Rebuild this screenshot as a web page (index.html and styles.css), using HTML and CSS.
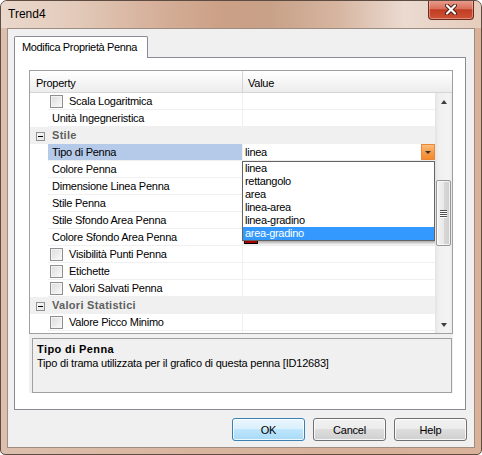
FILE: index.html
```html
<!DOCTYPE html>
<html lang="it">
<head>
<meta charset="utf-8">
<title>Trend4</title>
<link rel="stylesheet" href="styles.css">
</head>
<body>
<div class="window">
  <div class="titlebar">
    <span class="title">Trend4</span>
    <div class="close">
      <svg width="12" height="11" viewBox="0 0 12 11">
        <path d="M2 1.5 L10 9.5 M10 1.5 L2 9.5" stroke="#4a1d12" stroke-width="4" stroke-linecap="round"/>
        <path d="M2 1.5 L10 9.5 M10 1.5 L2 9.5" stroke="#ffffff" stroke-width="2.2" stroke-linecap="round"/>
      </svg>
    </div>
  </div>
  <div class="client">
    <div class="tabs"><div class="tab">Modifica Proprietà Penna</div></div>
    <div class="panel">
      <div class="pg">
        <div class="grid">
          <div class="ghead">
            <div class="hprop">Property</div>
            <div class="hval">Value</div>
          </div>
          <div class="gbody">
            <div class="rows">
              <div class="row"><div class="margin"></div><div class="name"><span class="cb"></span>Scala Logaritmica</div><div class="val"></div></div>
              <div class="row"><div class="margin"></div><div class="name">Unità Ingegneristica</div><div class="val"></div></div>
              <div class="row cat"><span class="minus"></span><span class="cattext">Stile</span></div>
              <div class="row sel"><div class="margin"></div><div class="name">Tipo di Penna</div><div class="val editor"><span class="edtext">linea</span><span class="ddbtn"><span class="ddtri"></span></span></div></div>
              <div class="row"><div class="margin"></div><div class="name">Colore Penna</div><div class="val"></div></div>
              <div class="row"><div class="margin"></div><div class="name">Dimensione Linea Penna</div><div class="val"></div></div>
              <div class="row"><div class="margin"></div><div class="name">Stile Penna</div><div class="val"></div></div>
              <div class="row"><div class="margin"></div><div class="name">Stile Sfondo Area Penna</div><div class="val"></div></div>
              <div class="row"><div class="margin"></div><div class="name">Colore Sfondo Area Penna</div><div class="val"><span class="sw"></span></div></div>
              <div class="row"><div class="margin"></div><div class="name"><span class="cb"></span>Visibilità Punti Penna</div><div class="val"></div></div>
              <div class="row"><div class="margin"></div><div class="name"><span class="cb"></span>Etichette</div><div class="val"></div></div>
              <div class="row"><div class="margin"></div><div class="name"><span class="cb"></span>Valori Salvati Penna</div><div class="val"></div></div>
              <div class="row cat"><span class="minus"></span><span class="cattext">Valori Statistici</span></div>
              <div class="row"><div class="margin"></div><div class="name"><span class="cb"></span>Valore Picco Minimo</div><div class="val"></div></div>
              <div class="row"><div class="margin"></div><div class="name"></div><div class="val"><span class="sw"></span></div></div>

              <div class="ddlist">
                <div class="opt">linea</div>
                <div class="opt">rettangolo</div>
                <div class="opt">area</div>
                <div class="opt">linea-area</div>
                <div class="opt">linea-gradino</div>
                <div class="opt hl">area-gradino</div>
              </div>
            </div>
            <div class="vscroll">
              <div class="sbtn"><span class="tri-up"></span></div>
              <div class="track-top"></div>
              <div class="thumb"><span class="grip"></span><span class="grip"></span><span class="grip"></span><span class="grip"></span></div>
              <div class="track-bottom"></div>
              <div class="sbtn"><span class="tri-down"></span></div>
            </div>
          </div>
        </div>
        <div class="desc">
          <div class="dtitle">Tipo di Penna</div>
          <div class="dtext">Tipo di trama utilizzata per il grafico di questa penna [ID12683]</div>
        </div>
      </div>
    </div>
    <div class="buttons">
      <button class="btn default">OK</button>
      <button class="btn">Cancel</button>
      <button class="btn">Help</button>
    </div>
  </div>
</div>
</body>
</html>
```

FILE: styles.css
```css
* { box-sizing: border-box; }
html, body { margin: 0; padding: 0; }
body {
  width: 482px;
  height: 455px;
  overflow: hidden;
  font-family: "Liberation Sans", Arial, sans-serif;
  font-size: 11px;
  letter-spacing: -0.25px;
  color: #000;
  background: #fff;
}

.window {
  width: 482px;
  height: 455px;
  border: 1px solid #5e4c43;
  border-radius: 7px 7px 5px 5px;
  background: linear-gradient(to right, #dcbfad 0%, #d9b59f 40%, #d7b19a 70%, #dab29a 100%);
  display: flex;
  flex-direction: column;
  overflow: hidden;
}

.titlebar {
  height: 27px;
  display: flex;
  align-items: flex-start;
  padding-left: 7px;
  background: linear-gradient(to right, #ead8cc 0%, #e3cbbb 15%, #d6b09a 32%, #cba086 46%, #c8a188 56%, #d6b5a0 70%, #ebdad0 84%, #e6cdbd 100%);
}
.title {
  font-size: 12px;
  line-height: 27px;
  letter-spacing: 0;
}
.close {
  margin-left: auto;
  margin-right: 7px;
  margin-top: -1px;
  width: 46px;
  height: 20px;
  border: 1px solid #6c2a1f;
  border-top: none;
  border-radius: 0 0 4px 4px;
  background: linear-gradient(#e9a091 0%, #d9705a 45%, #c23c24 52%, #cd5235 100%);
  box-shadow: inset 0 0 0 1px rgba(255, 210, 200, 0.45);
  display: flex;
  align-items: center;
  justify-content: center;
}

.client {
  flex: 1;
  margin: 0 6px 6px 6px;
  border: 1px solid #9f8c80;
  background: #f0f0f0;
  display: flex;
  flex-direction: column;
  padding: 7px 8px 0 6px;
}

.tabs { display: flex; height: 21px; }
.tab {
  width: 134px;
  height: 22px;
  margin-bottom: -1px;
  position: relative;
  z-index: 1;
  border: 1px solid #898c95;
  border-bottom: none;
  border-radius: 2px 2px 0 0;
  background: #fff;
  padding-left: 7px;
  line-height: 20px;
  letter-spacing: -0.35px;
}

.panel {
  height: 353px;
  border: 1px solid #898c95;
  background: #fff;
  padding: 12px 12px 0 14px;
}

.pg {
  width: 424px;
  height: 323px;
  display: flex;
  flex-direction: column;
  background: #f0f0f0;
}

.grid {
  height: 264px;
  border: 1px solid #a0a0a0;
  background: #fff;
  display: flex;
  flex-direction: column;
}
.ghead {
  height: 22px;
  display: flex;
  background: linear-gradient(#ffffff 0%, #f7f7f7 45%, #ececec 100%);
  border-bottom: 1px solid #d5d5d5;
}
.hprop {
  width: 213px;
  border-right: 1px solid #d5d5d5;
  padding: 4px 0 0 6px;
  line-height: 16px;
}
.hval {
  flex: 1;
  padding: 4px 0 0 5px;
  line-height: 16px;
}

.gbody { flex: 1; display: flex; overflow: hidden; }
.rows { flex: 1; position: relative; overflow: hidden; }

.row {
  display: grid;
  grid-template-columns: 18px 195px 192px;
  height: 17px;
}
.name {
  height: 17px;
  border-bottom: 1px solid #f0f0f0;
  border-right: 1px solid #f0f0f0;
  padding: 0 0 0 4px;
  line-height: 16px;
  white-space: nowrap;
  overflow: hidden;
}
.val {
  height: 17px;
  border-bottom: 1px solid #f0f0f0;
  padding: 1px 0 0 1px;
  line-height: 16px;
  white-space: nowrap;
  overflow: hidden;
}
.cb {
  display: inline-block;
  vertical-align: top;
  width: 13px;
  height: 13px;
  margin: 2px 6px 0 -2px;
  border: 1px solid #8e8f8f;
  background: linear-gradient(135deg, #dcdcdc 0%, #ececec 55%, #fafafa 100%);
  box-shadow: inset 0 0 0 1px #f4f4f4;
}
.row.cat {
  display: flex;
  background: #f0f0f0;
}
.minus {
  width: 9px;
  height: 9px;
  margin: 5px 0 0 6px;
  border: 1px solid #919191;
  background: linear-gradient(135deg, #f8f8f8, #e6e6e6);
  position: relative;
}
.minus::after {
  content: "";
  position: absolute;
  left: 1px;
  top: 3px;
  width: 5px;
  height: 1px;
  background: #000;
}
.cattext {
  margin-left: 7px;
  font-weight: bold;
  color: #5f5f5f;
  letter-spacing: 0.3px;
  line-height: 16px;
}

.row.sel .name { background: #b5c9e8; }
.val.editor {
  display: flex;
  padding: 0;
  background: #fff;
}
.edtext {
  flex: 1;
  padding: 0 0 0 2px;
  line-height: 16px;
}
.ddbtn {
  width: 14px;
  height: 16px;
  background: linear-gradient(#fbbe7e 0%, #f79a45 55%, #f58a2e 100%);
  border: 1px solid #e8883a;
  display: flex;
  align-items: center;
  justify-content: center;
}
.ddtri {
  width: 0;
  height: 0;
  border-left: 3px solid transparent;
  border-right: 3px solid transparent;
  border-top: 3px solid #333;
}

.sw {
  display: inline-block;
  vertical-align: top;
  width: 14px;
  height: 13px;
  margin: 1px 0 0 0;
  border: 1px solid #000;
  background: #e00000;
}

.ddlist {
  position: absolute;
  left: 212px;
  top: 68px;
  width: 193px;
  height: 80px;
  border: 1px solid #646464;
  background: #fff;
  box-shadow: 2px 2px 3px rgba(0, 0, 0, 0.35);
  letter-spacing: -0.3px;
}
.opt {
  height: 13px;
  line-height: 13px;
  padding-left: 2px;
  white-space: nowrap;
}
.opt.hl { background: #3399ff; color: #fff; }

.vscroll {
  width: 17px;
  display: flex;
  flex-direction: column;
  background: linear-gradient(to right, #e3e3e3 0%, #efefef 20%, #f4f4f4 80%, #ebebeb 100%);
}
.sbtn {
  height: 17px;
  display: flex;
  align-items: center;
  justify-content: center;
}
.tri-up {
  width: 0; height: 0;
  border-left: 3.5px solid transparent;
  border-right: 3.5px solid transparent;
  border-bottom: 4px solid #3d3d3d;
}
.tri-down {
  width: 0; height: 0;
  border-left: 3.5px solid transparent;
  border-right: 3.5px solid transparent;
  border-top: 4px solid #3d3d3d;
}
.track-top { height: 70px; }
.track-bottom { flex: 1; }
.thumb {
  height: 66px;
  margin: 0 1px;
  border: 1px solid #979797;
  border-radius: 2px;
  background: linear-gradient(to right, #f2f2f2 0%, #e9e9e9 50%, #d8d8d8 51%, #cfcfcf 100%);
  box-shadow: inset 0 0 0 1px rgba(255,255,255,0.7);
  display: flex;
  flex-direction: column;
  align-items: center;
  justify-content: center;
  gap: 1px;
}
.grip {
  width: 7px;
  height: 1px;
  background: #505050;
  box-shadow: 0 1px 0 #ffffff;
}

.desc {
  flex: 1;
  margin: 4px 1px 0 3px;
  border: 1px solid #a0a0a0;
  padding: 3px 4px;
}
.dtitle {
  font-weight: bold;
  letter-spacing: 0.4px;
  line-height: 14px;
}
.dtext {
  line-height: 14px;
  letter-spacing: -0.2px;
}

.buttons {
  display: flex;
  justify-content: flex-end;
  gap: 8px;
  padding-top: 8px;
  margin-right: -1px;
}
.btn {
  width: 73px;
  height: 23px;
  border: 1px solid #707070;
  border-radius: 3px;
  background: linear-gradient(#f2f2f2 0%, #ebebeb 49%, #dddddd 50%, #cfcfcf 100%);
  box-shadow: inset 0 0 0 1px rgba(255,255,255,0.8);
  font-family: "Liberation Sans", Arial, sans-serif;
  font-size: 11px;
  letter-spacing: -0.2px;
  color: #000;
  padding: 0;
}
.btn.default {
  border-color: #3c7fb1;
  background: linear-gradient(#eaf6fd 0%, #d9f0fc 49%, #bee6fd 50%, #a7d9f5 100%);
}
```
